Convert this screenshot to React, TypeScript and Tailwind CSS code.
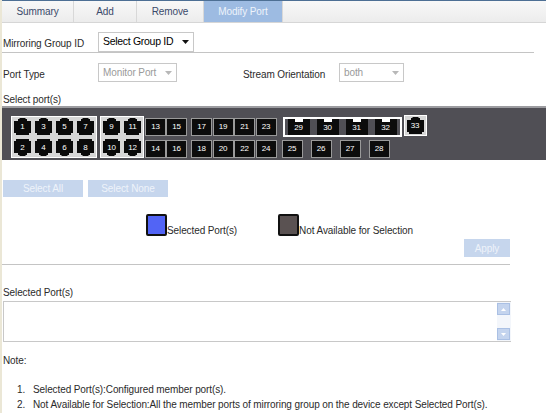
import React from 'react';

const font = { fontFamily: '"Liberation Sans", Arial, sans-serif' };

const Rj45: React.FC<{ n: number; down?: boolean }> = ({ n, down }) => (
  <div className="relative w-[19px] h-[17px]">
    <svg width="19" height="17" viewBox="0 0 19 17" className={down ? 'rotate-180' : ''}>
      <path d="M1 3 H5 V1 H6.5 V0 H12.5 V1 H14 V3 H18 V15 H16 V17 H3 V15 H1 Z" fill="#0a0a0a" />
    </svg>
    <span className="absolute inset-0 flex items-center justify-center text-[8px] text-white pt-[1px]">{n}</span>
  </div>
);

const Sfp: React.FC<{ n: number }> = ({ n }) => (
  <div className="w-[21px] h-[18px] bg-[#0c0c0c] border border-[#9a9a9a] flex items-center justify-center text-[8px] text-white">
    {n}
  </div>
);

const Combo: React.FC<{ n: number }> = ({ n }) => (
  <div className="relative w-[22px] h-[16px] bg-[#0c0c0c] flex items-center justify-center text-[8px] text-white">
    <div className="absolute top-0 left-[7px] w-[8px] h-[3px] bg-white" />
    <span className="pt-[2px]">{n}</span>
  </div>
);

const Select: React.FC<{ label: string; w: string; big?: boolean; disabled?: boolean }> = ({ label, w, big, disabled }) => (
  <div
    className={`${w} ${big ? 'h-[20px] text-[10.5px] tracking-[-0.3px] text-black' : 'h-[19px] text-[10px] text-[#9a9a9a]'} whitespace-nowrap border border-[#c8c8c8] bg-white flex items-center gap-[4px] justify-between pl-[4px] pr-[4px]`}
  >
    <span>{label}</span>
    <svg width="7" height="4" viewBox="0 0 7 4" className="shrink-0">
      <path d="M0 0 H7 L3.5 4 Z" fill={disabled ? '#b8b8b8' : '#111'} />
    </svg>
  </div>
);

const Tab: React.FC<{ label: string; w: string; active?: boolean }> = ({ label, w, active }) => (
  <div
    className={`${w} h-full flex items-center justify-center border-r border-[#d8d8d8] ${
      active ? 'bg-[#9dbbe2] text-[#eef3fb]' : 'text-[#3a4a6a]'
    }`}
  >
    {label}
  </div>
);

const App: React.FC = () => {
  return (
    <div style={font} className="w-[546px] h-[413px] overflow-hidden bg-white border-l-2 border-[#ebe7d6] text-[10px] tracking-[-0.1px] text-[#2b2b2b]">
      {/* tabs */}
      <div className="h-[23px] border-t border-[#4d6f94] border-b border-b-[#d6d6d6] bg-gradient-to-b from-[#f8f8f8] to-[#ececec] flex">
        <Tab label="Summary" w="w-[72px]" />
        <Tab label="Add" w="w-[63px]" />
        <Tab label="Remove" w="w-[67px]" />
        <Tab label="Modify Port" w="w-[79px]" active />
      </div>

      {/* mirroring group */}
      <div className="h-[30px] flex items-center pt-[8px] pl-[1px] w-[532px] border-b border-[#c4c4c4]">
        <span className="w-[95px] pt-[3px]">Mirroring Group ID</span>
        <Select label="Select Group ID" w="w-[96px]" big />
      </div>

      {/* port type row */}
      <div className="h-[36px] flex items-center pl-[1px] pt-[3px]">
        <span className="w-[95px] pt-[3px]">Port Type</span>
        <Select label="Monitor Port" w="w-[79px]" disabled />
        <span className="ml-[66px] w-[96px] pt-[3px]">Stream Orientation</span>
        <Select label="both" w="w-[65px]" disabled />
      </div>

      <div className="h-[17px] pl-[1px] flex items-center pt-[3px]">Select port(s)</div>

      {/* port panel */}
      <div className="h-[54px] bg-[#504f55] border-t-2 border-[#9c9ca0] flex items-start pt-[7px] pl-[9px]">
        <div className="bg-[#d6d6d6] border border-white p-[1px] grid grid-cols-4 gap-x-[2px] gap-y-[4px] mt-[1px]">
          {[1, 3, 5, 7].map((n) => <Rj45 key={n} n={n} />)}
          {[2, 4, 6, 8].map((n) => <Rj45 key={n} n={n} down />)}
        </div>
        <div className="ml-[3px] bg-[#d6d6d6] border border-white p-[1px] grid grid-cols-2 gap-x-[2px] gap-y-[4px] mt-[1px]">
          {[9, 11].map((n) => <Rj45 key={n} n={n} />)}
          {[10, 12].map((n) => <Rj45 key={n} n={n} down />)}
        </div>
        <div className="ml-[1px] flex gap-[0px] mt-[3px]">
          {[13, 15].map((n) => (
            <div key={n} className="flex flex-col gap-[4px]">
              <Sfp n={n} />
              <Sfp n={n + 1} />
            </div>
          ))}
        </div>
        <div className="ml-[4px] flex gap-[0.5px] mt-[3px]">
          {[17, 19, 21, 23].map((n) => (
            <div key={n} className="flex flex-col gap-[4px]">
              <Sfp n={n} />
              <Sfp n={n + 1} />
            </div>
          ))}
        </div>
        <div className="ml-[6px] flex flex-col gap-[3px] mt-[2px]">
          <div className="flex items-start gap-[2px]">
            <div className="border-2 border-white flex gap-[7px] px-[3px]">
              {[29, 30, 31, 32].map((n) => <Combo key={n} n={n} />)}
            </div>
            <div className="-mt-[2px] bg-[#d6d6d6] border border-white p-[1px]">
              <Rj45 n={33} />
            </div>
          </div>
          <div className="flex gap-[8px] -ml-[1px]">
            {[25, 26, 27, 28].map((n) => <Sfp key={n} n={n} />)}
          </div>
        </div>
      </div>

      {/* select buttons */}
      <div className="flex gap-[5px] pl-[1px] mt-[20px]">
        <div className="w-[80px] h-[17px] bg-[#c6d6ed] text-[#eef3fa] flex items-center justify-center">Select All</div>
        <div className="w-[80px] h-[17px] bg-[#c6d6ed] text-[#eef3fa] flex items-center justify-center">Select None</div>
      </div>

      {/* legend */}
      <div className="flex items-end mt-[16px] pl-[144px] h-[23px]">
        <div className="w-[21px] h-[22px] bg-[#5264f5] border-2 border-[#111] rounded-[2px]" />
        <span className="leading-[12px] mb-[-1px]">Selected Port(s)</span>
        <div className="ml-[41px] w-[21px] h-[22px] bg-[#5a5252] border-2 border-[#111] rounded-[2px]" />
        <span className="leading-[12px] mb-[-1px]">Not Available for Selection</span>
      </div>

      <div className="flex justify-end w-[508px] mt-[3px]">
        <div className="w-[46px] h-[18px] bg-[#c6d6ed] text-[#eef3fa] flex items-center justify-center">Apply</div>
      </div>

      <div className="w-[508px] border-b border-[#c4c4c4] mt-[7px]" />

      <div className="pl-[1px] mt-[22px] leading-[12px]">Selected Port(s)</div>

      <div className="ml-[1px] mt-[2px] w-[508px] h-[41px] border border-[#c8c8c8] border-r-0 flex justify-end">
        <div className="w-[14px] h-full bg-[#f3f6fb] flex flex-col justify-between py-[1px]">
          <div className="w-[13px] h-[12px] bg-[#c4d4ee] border border-[#aac0e4] flex items-center justify-center">
            <svg width="5" height="3" viewBox="0 0 5 3"><path d="M0 3 L2.5 0 L5 3 Z" fill="#fff" /></svg>
          </div>
          <div className="w-[13px] h-[12px] bg-[#c4d4ee] border border-[#aac0e4] flex items-center justify-center">
            <svg width="5" height="3" viewBox="0 0 5 3"><path d="M0 0 L2.5 3 L5 0 Z" fill="#fff" /></svg>
          </div>
        </div>
      </div>

      <div className="pl-[1px] mt-[13px] leading-[12px]">Note:</div>

      <ol className="mt-[15px] leading-[15px]">
        <li className="flex"><span className="w-[31px] pl-[15px]">1.</span>Selected Port(s):Configured member port(s).</li>
        <li className="flex"><span className="w-[31px] pl-[15px]">2.</span>Not Available for Selection:All the member ports of mirroring group on the device except Selected Port(s).</li>
      </ol>
    </div>
  );
};

export default App;
